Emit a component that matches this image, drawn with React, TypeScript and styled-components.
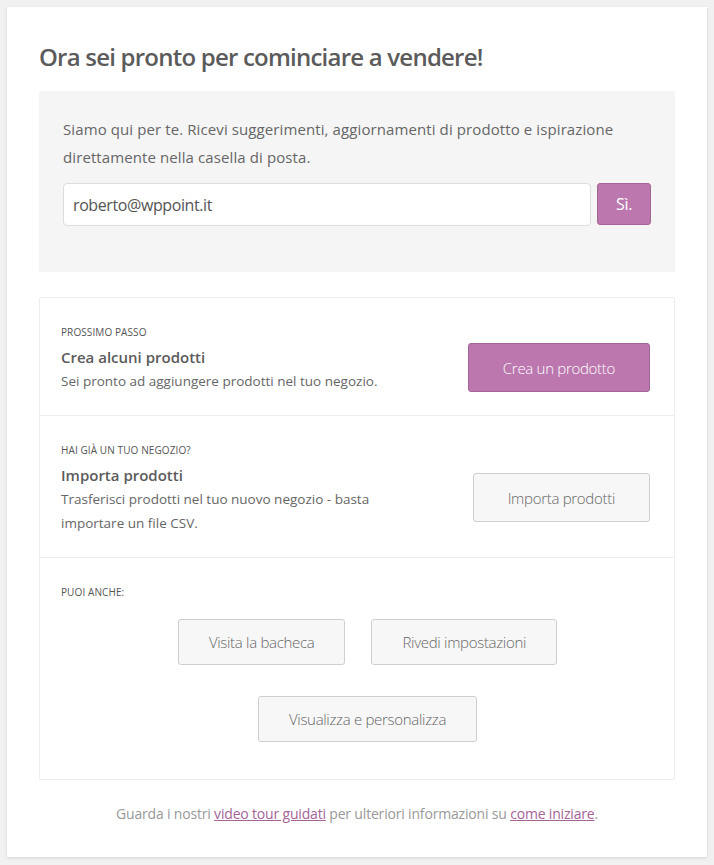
import React from "react";
import styled, { createGlobalStyle, css } from "styled-components";

const Global = createGlobalStyle`
  html, body { margin: 0; padding: 0; background: #f1f1f1; }
  body { font-family: "Open Sans", "Noto Sans", sans-serif; color: #666; }
  * { box-sizing: border-box; }
`;

const Page = styled.div`
  padding: 7px;
`;

const Card = styled.main`
  background: #fff;
  box-shadow: 0 1px 3px rgba(0, 0, 0, 0.13);
  padding: 32px 32px 0;
  height: 850px;
`;

const Title = styled.h1`
  margin: 0 0 16px;
  font-size: 24px;
  line-height: 36px;
  font-weight: 600;
  color: #5b5b5b;
  letter-spacing: -0.78px;
`;

const Newsletter = styled.section`
  background: #f5f5f5;
  padding: 24px 24px 46px;
  margin-bottom: 25px;
`;

const Intro = styled.p`
  margin: 0 0 12px;
  font-size: 15px;
  line-height: 28px;
  color: #666;
  letter-spacing: 0.1px;
`;

const Form = styled.form`
  display: flex;
  gap: 6px;
`;

const Email = styled.input`
  flex: 1;
  height: 43px;
  border: 1px solid #ddd;
  border-radius: 4px;
  padding: 0 9px;
  font-family: inherit;
  font-size: 16px;
  color: #555;
  background: #fff;
  letter-spacing: -0.4px;
  outline: none;
`;

type BtnProps = { $primary?: boolean; $tall?: boolean };

const Button = styled.button<BtnProps>`
  font-family: inherit;
  font-size: 15px;
  font-weight: 300;
  line-height: 20px;
  border-radius: 3px;
  cursor: pointer;
  white-space: nowrap;
  letter-spacing: -0.3px;
  padding: ${(p) => (p.$tall ? "14px 34px 13px" : "12px 30px 12px")};
  ${(p) =>
    p.$primary
      ? css`
          background: #bb77ae;
          border: 1px solid #a36597;
          color: #fff;
        `
      : css`
          background: #f7f7f7;
          border: 1px solid #cfcfcf;
          color: #666;
        `}
`;

const YesButton = styled(Button)`
  width: 54px;
  height: 42px;
  padding: 0;
  font-size: 16px;
  font-weight: 400;
`;

const Steps = styled.ul`
  list-style: none;
  margin: 0;
  padding: 0;
  border: 1px solid #eee;
  border-radius: 2px;
`;

const Step = styled.li<{ $last?: boolean }>`
  padding: ${(p) => (p.$last ? "23px 0 37px 21px" : "23px 24px 22px 21px")};
  border-bottom: ${(p) => (p.$last ? "none" : "1px solid #eee")};
`;

const Label = styled.div`
  font-size: 10px;
  line-height: 22px;
  text-transform: uppercase;
  color: #555;
  letter-spacing: 0.1px;
`;

const StepBody = styled.div`
  display: flex;
  align-items: center;
  justify-content: space-between;
  margin-top: 2px;
`;

const StepText = styled.div`
  max-width: 335px;
`;

const StepTitle = styled.h3`
  margin: 0;
  font-size: 15px;
  line-height: 24px;
  font-weight: 600;
  color: #5b5b5b;
  letter-spacing: 0;
`;

const StepDesc = styled.p`
  margin: 0;
  font-size: 13.5px;
  line-height: 24px;
  color: #666;
  letter-spacing: 0;
`;

const StepAction = styled.div`
  margin-top: -4px;
`;

const Extras = styled.div`
  display: flex;
  flex-direction: column;
  align-items: center;
  gap: 31px;
  margin-top: 16px;
`;

const ExtrasRow = styled.div`
  display: flex;
  gap: 26px;
`;

const Footer = styled.p`
  margin: 22px 0 0;
  text-align: center;
  font-size: 14px;
  line-height: 24px;
  color: #999;
  letter-spacing: -0.18px;
`;

const Link = styled.a`
  color: #a46497;
  text-decoration: underline;
`;

export default function App() {
  return (
    <>
      <Global />
      <Page>
        <Card>
          <Title>Ora sei pronto per cominciare a vendere!</Title>
          <Newsletter>
            <Intro>
              Siamo qui per te. Ricevi suggerimenti, aggiornamenti di prodotto e ispirazione
              direttamente nella casella di posta.
            </Intro>
            <Form onSubmit={(e) => e.preventDefault()}>
              <Email type="email" defaultValue="roberto@wppoint.it" />
              <YesButton $primary type="submit">
                Sì.
              </YesButton>
            </Form>
          </Newsletter>
          <Steps>
            <Step>
              <Label>Prossimo passo</Label>
              <StepBody>
                <StepText>
                  <StepTitle>Crea alcuni prodotti</StepTitle>
                  <StepDesc>Sei pronto ad aggiungere prodotti nel tuo negozio.</StepDesc>
                </StepText>
                <StepAction>
                  <Button $primary $tall>
                    Crea un prodotto
                  </Button>
                </StepAction>
              </StepBody>
            </Step>
            <Step>
              <Label>Hai già un tuo negozio?</Label>
              <StepBody>
                <StepText>
                  <StepTitle>Importa prodotti</StepTitle>
                  <StepDesc>
                    Trasferisci prodotti nel tuo nuovo negozio - basta importare un file CSV.
                  </StepDesc>
                </StepText>
                <StepAction>
                  <Button $tall>Importa prodotti</Button>
                </StepAction>
              </StepBody>
            </Step>
            <Step $last>
              <Label>Puoi anche:</Label>
              <Extras>
                <ExtrasRow>
                  <Button>Visita la bacheca</Button>
                  <Button>Rivedi impostazioni</Button>
                </ExtrasRow>
                <ExtrasRow>
                  <Button>Visualizza e personalizza</Button>
                </ExtrasRow>
              </Extras>
            </Step>
          </Steps>
          <Footer>
            Guarda i nostri <Link href="#">video tour guidati</Link> per ulteriori informazioni su{" "}
            <Link href="#">come iniziare</Link>.
          </Footer>
        </Card>
      </Page>
    </>
  );
}
